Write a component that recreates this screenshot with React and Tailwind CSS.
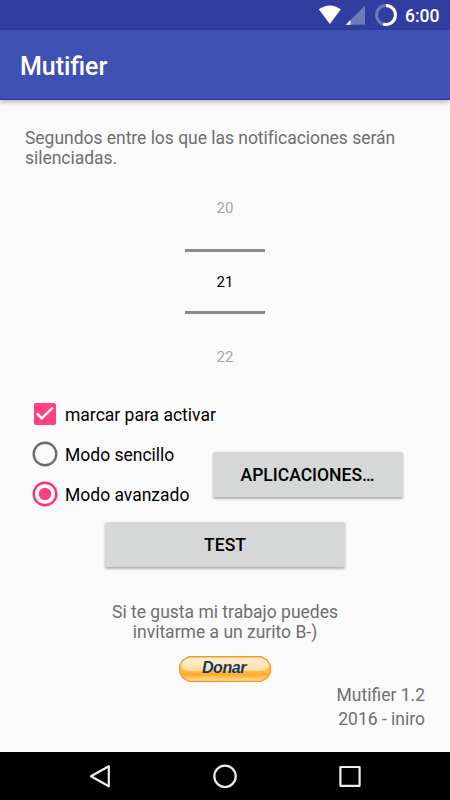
import React from "react";

function StatusBar() {
  return (
    <div className="flex h-[30px] shrink-0 items-center bg-[#303f9f] text-white">
      <svg className="ml-[318px] h-[30px] w-[70px] shrink-0" viewBox="318 0 70 30" overflow="visible">
        <path d="M318.8 9.2Q329.7 1.6 340.9 9.2L329.8 24Z" fill="#fff" />
        <path d="M365 5.5V24.7H345.8Z" fill="#fff" fillOpacity=".3" />
        <path d="M350.5 20V24.7H345.8Z" fill="#fff" />
        <circle cx="386" cy="15" r="9.5" fill="none" stroke="#fff" strokeOpacity=".3" strokeWidth="3" />
        <path d="M386 5.5A9.5 9.5 0 1 1 383.2 24.1" fill="none" stroke="#fff" strokeWidth="3" />
      </svg>
      <span className="ml-[17px] pt-[2px] text-[17.5px] leading-[20px] font-medium">6:00</span>
    </div>
  );
}

function NumberPicker() {
  return (
    <div className="mx-auto mt-[30px] flex w-20 flex-col text-center text-[15px] leading-[20px] text-[#a4a4a4]">
      <span>20</span>
      <div className="mt-[31px] h-[65px] border-t-[3px] border-b-[3px] border-[#8a8a8a] pt-[20px] text-black">21</div>
      <span className="mt-[33px]">22</span>
    </div>
  );
}

function Radio({ checked, label }) {
  const color = checked ? "#ff2f7d" : "#6b6b6b";
  return (
    <label className="flex h-10 items-center gap-[7px]">
      <svg className="h-[26px] w-[26px] shrink-0" viewBox="0 0 26 26">
        <circle cx="13" cy="13" r="11.3" fill="none" stroke={color} strokeWidth="2.4" />
        {checked && <circle cx="13" cy="13" r="6.2" fill="#ff4081" />}
      </svg>
      <span className="pt-[2px]">{label}</span>
    </label>
  );
}

function Button({ className, children }) {
  return (
    <button
      className={`rounded-[2.5px] bg-[#d6d7d7] text-[17.5px] leading-[20px] font-medium text-black shadow-[0_1.5px_2.5px_rgba(0,0,0,0.3)] ${className}`}
    >
      {children}
    </button>
  );
}

function NavBar() {
  return (
    <nav className="flex h-12 shrink-0 items-center bg-black">
      <svg className="h-12 w-full" viewBox="0 0 450 48" fill="none" stroke="#eee" strokeWidth="2.2" strokeLinejoin="round">
        <path d="M108.8 14.2V34.3L91 24.3Z" />
        <circle cx="225" cy="24.3" r="10.7" />
        <rect x="340.4" y="15" width="19.2" height="18.8" />
      </svg>
    </nav>
  );
}

export default function App() {
  return (
    <div className="flex h-[800px] w-[450px] flex-col overflow-hidden bg-[#fafafa] font-['Roboto',sans-serif] text-[17.5px] leading-[20px] text-[#6f6f6f]">
      <StatusBar />
      <header className="z-10 flex h-[70px] shrink-0 items-center border-b border-[#1e38a0] bg-[#3f51b5] px-5 pt-[4px] text-[25px] font-medium text-white shadow-[0_2px_5px_rgba(0,0,0,0.28)]">
        Mutifier
      </header>
      <main className="flex h-[652px] shrink-0 flex-col">
        <p className="mx-[25px] mt-[28px] whitespace-nowrap tracking-[-0.03px]">
          Segundos entre los que las notificaciones serán
          <br />
          silenciadas.
        </p>
        <NumberPicker />
        <div className="mt-[27px] flex pl-8 text-black">
          <div className="w-[180px] whitespace-nowrap">
            <label className="flex h-10 items-center gap-[7px]">
              <svg className="h-[26px] w-[26px] shrink-0" viewBox="0 0 26 26">
                <rect x="2" y="2" width="22" height="22" rx="2" fill="#ff4081" />
                <path d="M4.8 12.4L9.8 17.4L20.7 6.5" fill="none" stroke="#fff" strokeWidth="2.4" />
              </svg>
              <span className="pt-[2px]">marcar para activar</span>
            </label>
            <Radio label="Modo sencillo" />
            <Radio checked label="Modo avanzado" />
          </div>
          <Button className="mt-[58px] ml-[0.5px] h-[45px] w-[190px]">APLICACIONES…</Button>
        </div>
        <Button className="mx-auto mt-[8px] h-[45px] w-[240px] shrink-0">TEST</Button>
        <p className="mt-[35px] text-center">
          Si te gusta mi trabajo puedes
          <br />
          invitarme a un zurito B-)
        </p>
        <button className="relative mx-auto mt-[14px] h-[26px] w-[92px] shrink-0">
          <svg className="absolute inset-0" width="92" height="26" viewBox="0 0 92 26">
            <defs>
              <linearGradient id="base" x2="0" y2="1">
                <stop stopColor="#ffd88c" />
                <stop offset=".55" stopColor="#ffbd50" />
                <stop offset=".72" stopColor="#ffab28" />
                <stop offset="1" stopColor="#ffe0a0" />
              </linearGradient>
              <linearGradient id="gloss" x2="0" y2="1">
                <stop stopColor="#fff1d8" />
                <stop offset="1" stopColor="#ffdb9c" />
              </linearGradient>
            </defs>
            <path d="M10 .7H82L88 4L91.3 9.5V16.5L88 22L82 25.3H10L4 22L.7 16.5V9.5L4 4Z" fill="url(#base)" stroke="#ff961c" strokeWidth="1.2" />
            <path d="M10 2H82Q90 5 90 10Q88 15 79 15H13Q4 15 2 10Q2 5 10 2Z" fill="url(#gloss)" />
          </svg>
          <span className="relative -top-px -left-px block font-['Liberation_Sans',sans-serif] text-[16px] leading-[24px] font-bold tracking-[-0.4px] text-[#123a63] italic">
            Donar
          </span>
        </button>
        <div className="mr-[25px] text-right leading-[24px]">
          <p className="mt-px">Mutifier 1.2</p>
          <p>2016 - iniro</p>
        </div>
      </main>
      <NavBar />
    </div>
  );
}
